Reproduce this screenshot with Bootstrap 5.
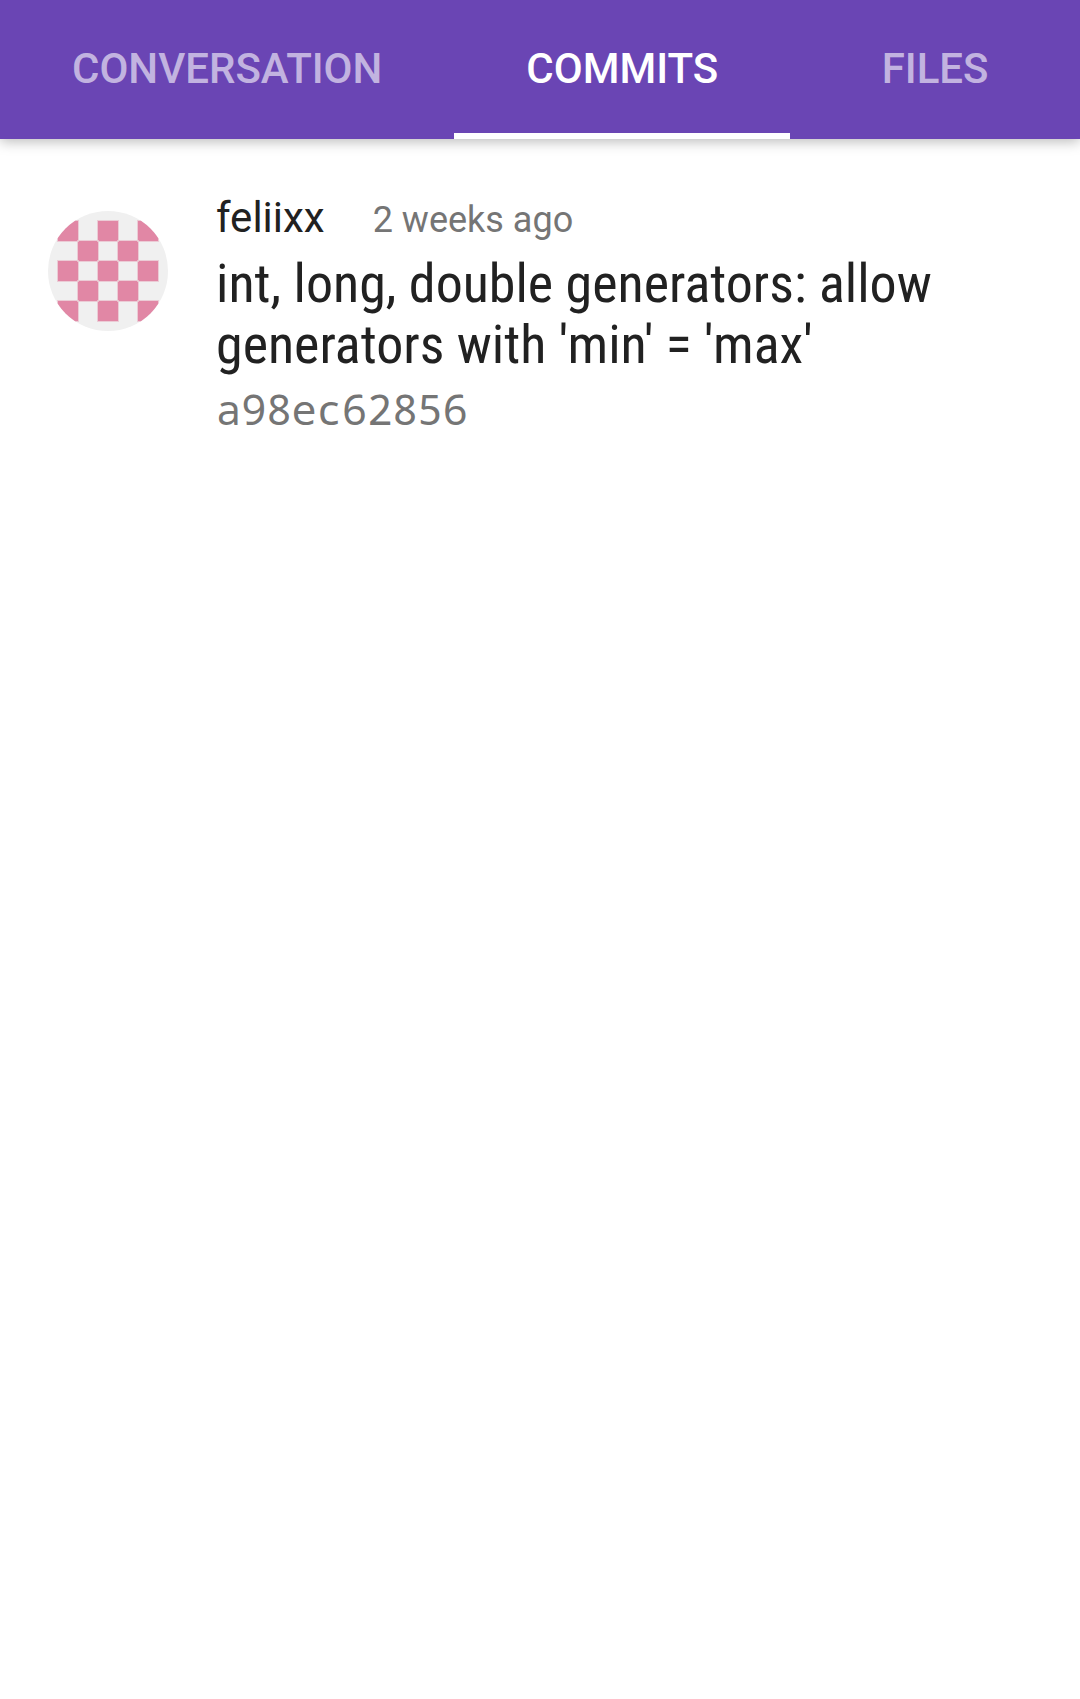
<!DOCTYPE html>
<html lang="en">
<head>
<meta charset="utf-8">
<meta name="viewport" content="width=device-width, initial-scale=1">
<title>Commits</title>
<link href="https://cdn.jsdelivr.net/npm/bootstrap@5.3.0/dist/css/bootstrap.min.css" rel="stylesheet">
<style>
body { font-family: Roboto, "Liberation Sans", sans-serif; color: #212121; background: #fff; }
.tab-bar { background: #6a45b4; box-shadow: 0 3px 12px rgba(0, 0, 0, .26); }
.tab-bar .nav-link { padding: 45px 72px 40px; border-bottom: 6px solid transparent; border-radius: 0; color: rgba(255, 255, 255, .6); font-size: 42px; font-weight: 500; line-height: 48px; text-align: center; text-transform: uppercase; }
.tab-bar .nav-link.active { color: #fff; border-bottom-color: #fff; }
.commit-item { padding: 54px 48px; gap: 48px; }
.avatar { width: 120px; height: 120px; margin-top: 18px; }
.author { font-size: 42px; line-height: 50px; }
.when { font-size: 36px; line-height: 50px; color: #757575; }
.commit-title { margin: 8px 0 5px; font-family: "Roboto Condensed", Roboto, sans-serif; font-size: 54px; font-weight: 400; line-height: 61px; }
.sha { font-family: "Noto Sans Mono", "DejaVu Sans Mono", monospace; font-size: 42px; line-height: 57px; color: #757575; }
</style>
</head>
<body>
<nav class="tab-bar" aria-label="Pull request">
  <div class="nav flex-nowrap">
    <a class="nav-link" href="#conversation">Conversation</a>
    <a class="nav-link active" href="#commits" aria-current="page">Commits</a>
    <a class="nav-link flex-grow-1" href="#files">Files</a>
  </div>
</nav>
<main id="commits">
  <article class="commit-item d-flex align-items-start">
    <svg class="avatar rounded-circle flex-shrink-0" viewBox="0 0 120 120" role="img" aria-label="feliixx">
      <rect width="120" height="120" fill="#f0f0f0"/>
      <path fill="#e187a5" stroke="#ebcbd5" stroke-width="1" d="M9.500 9.500h21v21h-21zM49.500 9.500h21v21h-21zM89.500 9.500h21v21h-21zM29.500 29.500h21v21h-21zM69.500 29.500h21v21h-21zM9.500 49.500h21v21h-21zM49.500 49.500h21v21h-21zM89.500 49.500h21v21h-21zM29.500 69.500h21v21h-21zM69.500 69.500h21v21h-21zM9.500 89.500h21v21h-21zM49.500 89.500h21v21h-21zM89.500 89.500h21v21h-21z"/>
    </svg>
    <div>
      <div class="d-flex gap-5 align-items-baseline">
        <span class="author">feliixx</span>
        <span class="when">2 weeks ago</span>
      </div>
      <h1 class="commit-title">int, long, double generators: allow generators with 'min' = 'max'</h1>
      <div class="sha">a98ec62856</div>
    </div>
  </article>
</main>
<script src="https://cdn.jsdelivr.net/npm/bootstrap@5.3.0/dist/js/bootstrap.bundle.min.js"></script>
</body>
</html>
